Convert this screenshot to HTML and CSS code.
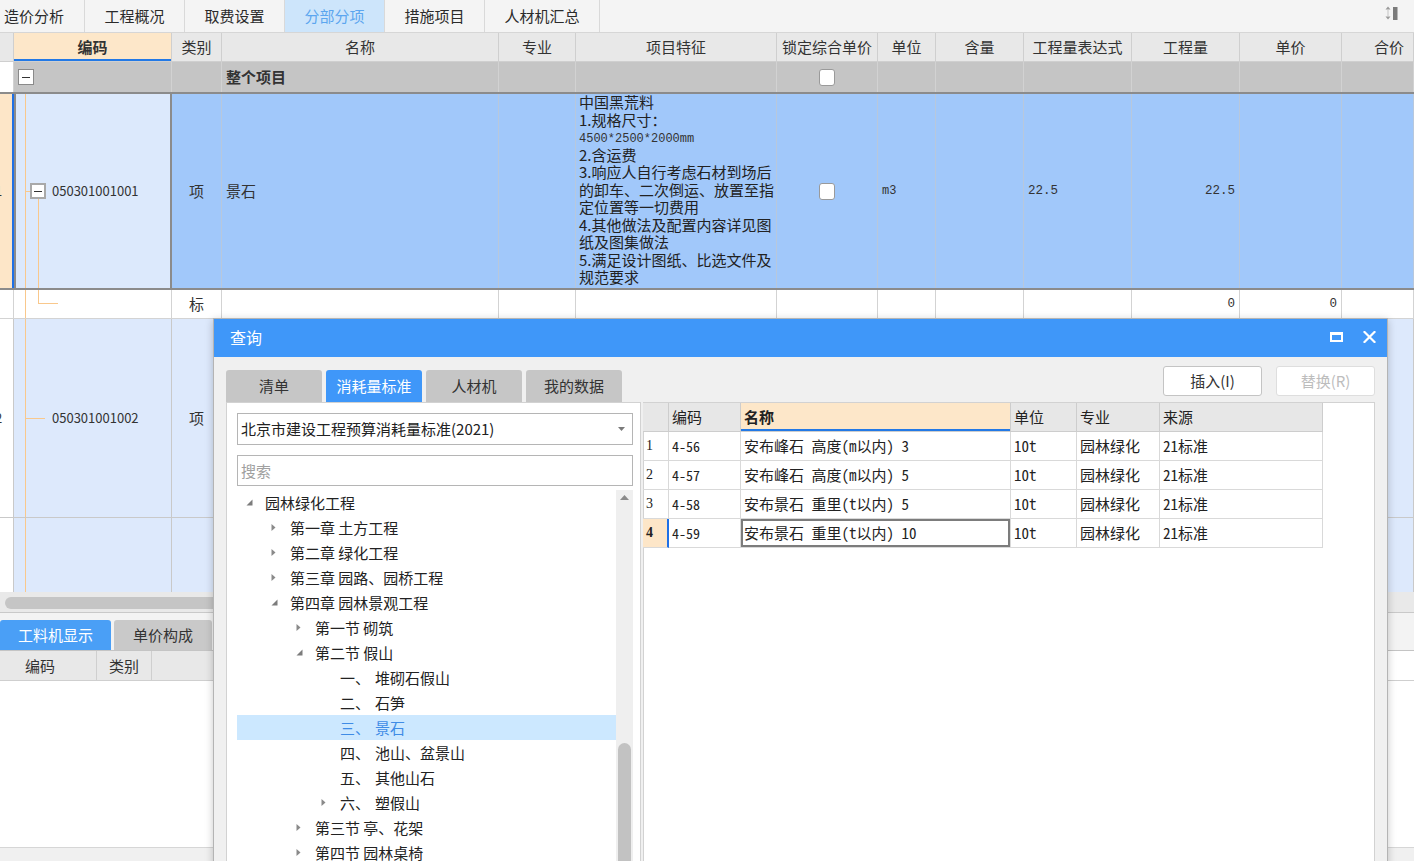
FILE: index.html
```html
<!DOCTYPE html>
<html lang="zh-CN">
<head>
<meta charset="utf-8">
<title>分部分项</title>
<link rel="stylesheet" href="styles.css">
</head>
<body>
<div class="app">
  <div class="topbar">
    <div class="tab first">造价分析</div>
    <div class="tab">工程概况</div>
    <div class="tab">取费设置</div>
    <div class="tab active">分部分项</div>
    <div class="tab">措施项目</div>
    <div class="tab wide">人材机汇总</div>
    <div class="topbar-fill"></div>
    <svg class="sort-icon" width="18" height="16" viewBox="0 0 18 16"><path d="M2.5 4.5 L5 1.5 L7.5 4.5Z" fill="#9a9a9a"/><path d="M5 5 V11" stroke="#c4c4c4" stroke-width="1"/><path d="M2.5 11.5 L5 14.5 L7.5 11.5Z" fill="#9a9a9a"/><rect x="10" y="2" width="4.5" height="13" fill="#7b7b7b"/></svg>
  </div>

  <div class="grid">
    <div class="row head">
      <div class="cell rn"></div>
      <div class="cell hot">编码</div>
      <div class="cell">类别</div>
      <div class="cell">名称</div>
      <div class="cell">专业</div>
      <div class="cell">项目特征</div>
      <div class="cell">锁定综合单价</div>
      <div class="cell">单位</div>
      <div class="cell">含量</div>
      <div class="cell">工程量表达式</div>
      <div class="cell">工程量</div>
      <div class="cell">单价</div>
      <div class="cell last">合价</div>
    </div>

    <div class="row total">
      <div class="cell rn"></div>
      <div class="cell code"><span class="tbox"></span></div>
      <div class="cell"></div>
      <div class="cell"><b>整个项目</b></div>
      <div class="cell"></div>
      <div class="cell"></div>
      <div class="cell ctr"><span class="chk"></span></div>
      <div class="cell"></div>
      <div class="cell"></div>
      <div class="cell"></div>
      <div class="cell"></div>
      <div class="cell"></div>
      <div class="cell"></div>
    </div>

    <div class="row sel">
      <div class="cell rn"><span class="rnum">1</span></div>
      <div class="cell code">
        <span class="vl"></span>
        <span class="vl-down"></span>
        <span class="conn short"></span><span class="tbox big"></span><span class="code-text">050301001001</span>
      </div>
      <div class="cell ctr">项</div>
      <div class="cell">景石</div>
      <div class="cell"></div>
      <div class="cell feat">
        <div class="feat-text">
          <div class="fl">中国黑荒料</div>
          <div class="fl">1.规格尺寸：</div>
          <div class="fl"><span class="mono-s low">4500*2500*2000mm</span></div>
          <div class="fl">2.含运费</div>
          <div class="fl">3.响应人自行考虑石材到场后</div>
          <div class="fl">的卸车、二次倒运、放置至指</div>
          <div class="fl">定位置等一切费用</div>
          <div class="fl">4.其他做法及配置内容详见图</div>
          <div class="fl">纸及图集做法</div>
          <div class="fl">5.满足设计图纸、比选文件及</div>
          <div class="fl">规范要求</div>
        </div>
      </div>
      <div class="cell ctr"><span class="chk"></span></div>
      <div class="cell"><span class="mono-s">m3</span></div>
      <div class="cell"></div>
      <div class="cell"><span class="mono">22.5</span></div>
      <div class="cell rt"><span class="mono">22.5</span></div>
      <div class="cell"></div>
      <div class="cell"></div>
    </div>

    <div class="row std">
      <div class="cell rn"></div>
      <div class="cell code">
        <span class="vl"></span>
        <span class="vl-stub"></span>
        <span class="hl-stub"></span>
      </div>
      <div class="cell ctr">标</div>
      <div class="cell"></div>
      <div class="cell"></div>
      <div class="cell"></div>
      <div class="cell"></div>
      <div class="cell"></div>
      <div class="cell"></div>
      <div class="cell"></div>
      <div class="cell rt"><span class="mono">0</span></div>
      <div class="cell rt"><span class="mono">0</span></div>
      <div class="cell"></div>
    </div>

    <div class="row lite r2">
      <div class="cell rn"><span class="rnum">2</span></div>
      <div class="cell code">
        <span class="vl"></span>
        <span class="conn long"></span><span class="code-text">050301001002</span>
      </div>
      <div class="cell ctr">项</div>
      <div class="cell"></div>
      <div class="cell"></div>
      <div class="cell"></div>
      <div class="cell"></div>
      <div class="cell"></div>
      <div class="cell"></div>
      <div class="cell"></div>
      <div class="cell"></div>
      <div class="cell"></div>
      <div class="cell"></div>
    </div>

    <div class="row lite r3">
      <div class="cell rn"></div>
      <div class="cell code"><span class="vl"></span></div>
      <div class="cell"></div>
      <div class="cell"></div>
      <div class="cell"></div>
      <div class="cell"></div>
      <div class="cell"></div>
      <div class="cell"></div>
      <div class="cell"></div>
      <div class="cell"></div>
      <div class="cell"></div>
      <div class="cell"></div>
      <div class="cell"></div>
    </div>
  </div>

  <div class="hscroll"><div class="hthumb"></div></div>

  <div class="bottom">
    <div class="btabs">
      <div class="btab on">工料机显示</div>
      <div class="btab">单价构成</div>
    </div>
    <div class="bhead">
      <div class="bh first">编码</div>
      <div class="bh">类别</div>
      <div class="bh"></div>
      <div class="bh blank"></div>
    </div>
    <div class="bbody"></div>
    <div class="bfoot"></div>
  </div>

  <div class="dialog">
    <div class="dlg-title">
      <span class="dlg-name">查询</span>
      <svg class="ico-max" width="13" height="10" viewBox="0 0 13 10"><rect x="1" y="1.5" width="11" height="7.5" fill="none" stroke="#fff" stroke-width="2"/><rect x="0" y="0" width="13" height="3" fill="#fff"/></svg>
      <svg class="ico-close" width="13" height="12" viewBox="0 0 13 12"><path d="M1.5 1 L11.5 11 M11.5 1 L1.5 11" stroke="#fff" stroke-width="2.2" stroke-linecap="square"/></svg>
    </div>
    <div class="dlg-tools">
      <div class="dlg-tabs">
        <div class="dtab">清单</div>
        <div class="dtab on">消耗量标准</div>
        <div class="dtab">人材机</div>
        <div class="dtab">我的数据</div>
      </div>
      <div class="dlg-btns">
        <div class="btn">插入(I)</div>
        <div class="btn disabled">替换(R)</div>
      </div>
    </div>
    <div class="dlg-body">
      <div class="lpanel">
        <div class="select">
          <span>北京市建设工程预算消耗量标准(2021)</span>
          <svg class="sel-arrow" width="7" height="4" viewBox="0 0 7 4"><path d="M0 0 H7 L3.5 4Z" fill="#7a7a7a"/></svg>
        </div>
        <div class="search">搜索</div>
        <div class="tree-wrap">
          <div class="tree">
            <div class="tnode l0"><span class="tw"><svg width="7" height="7" viewBox="0 0 7 7"><path d="M6.5 0.5 V6.5 H0.5Z" fill="#7c7c7c"/></svg></span><span class="tt">园林绿化工程</span></div>
            <div class="tnode l1"><span class="tw"><svg width="5" height="7" viewBox="0 0 5 7"><path d="M0.5 0 L4.5 3.5 L0.5 7Z" fill="#8a8a8a"/></svg></span><span class="tt">第一章 土方工程</span></div>
            <div class="tnode l1"><span class="tw"><svg width="5" height="7" viewBox="0 0 5 7"><path d="M0.5 0 L4.5 3.5 L0.5 7Z" fill="#8a8a8a"/></svg></span><span class="tt">第二章 绿化工程</span></div>
            <div class="tnode l1"><span class="tw"><svg width="5" height="7" viewBox="0 0 5 7"><path d="M0.5 0 L4.5 3.5 L0.5 7Z" fill="#8a8a8a"/></svg></span><span class="tt">第三章 园路、园桥工程</span></div>
            <div class="tnode l1"><span class="tw"><svg width="7" height="7" viewBox="0 0 7 7"><path d="M6.5 0.5 V6.5 H0.5Z" fill="#7c7c7c"/></svg></span><span class="tt">第四章 园林景观工程</span></div>
            <div class="tnode l2"><span class="tw"><svg width="5" height="7" viewBox="0 0 5 7"><path d="M0.5 0 L4.5 3.5 L0.5 7Z" fill="#8a8a8a"/></svg></span><span class="tt">第一节 砌筑</span></div>
            <div class="tnode l2"><span class="tw"><svg width="7" height="7" viewBox="0 0 7 7"><path d="M6.5 0.5 V6.5 H0.5Z" fill="#7c7c7c"/></svg></span><span class="tt">第二节 假山</span></div>
            <div class="tnode l3"><span class="tw"></span><span class="tt">一、<span class="sp"></span>堆砌石假山</span></div>
            <div class="tnode l3"><span class="tw"></span><span class="tt">二、<span class="sp"></span>石笋</span></div>
            <div class="tnode l3 on"><span class="tw"></span><span class="tt">三、<span class="sp"></span>景石</span></div>
            <div class="tnode l3"><span class="tw"></span><span class="tt">四、<span class="sp"></span>池山、盆景山</span></div>
            <div class="tnode l3"><span class="tw"></span><span class="tt">五、<span class="sp"></span>其他山石</span></div>
            <div class="tnode l3"><span class="tw"><svg width="5" height="7" viewBox="0 0 5 7"><path d="M0.5 0 L4.5 3.5 L0.5 7Z" fill="#8a8a8a"/></svg></span><span class="tt">六、<span class="sp"></span>塑假山</span></div>
            <div class="tnode l2"><span class="tw"><svg width="5" height="7" viewBox="0 0 5 7"><path d="M0.5 0 L4.5 3.5 L0.5 7Z" fill="#8a8a8a"/></svg></span><span class="tt">第三节 亭、花架</span></div>
            <div class="tnode l2"><span class="tw"><svg width="5" height="7" viewBox="0 0 5 7"><path d="M0.5 0 L4.5 3.5 L0.5 7Z" fill="#8a8a8a"/></svg></span><span class="tt">第四节 园林桌椅</span></div>
          </div>
          <div class="vscroll">
            <svg class="vs-up" width="9" height="5" viewBox="0 0 9 5"><path d="M0 5 L4.5 0 L9 5Z" fill="#8a8a8a"/></svg>
            <div class="vthumb"></div>
          </div>
        </div>
      </div>
      <div class="rpanel">
        <div class="qtable">
          <div class="qrow qhead">
            <div class="qc"></div>
            <div class="qc">编码</div>
            <div class="qc hot">名称</div>
            <div class="qc">单位</div>
            <div class="qc">专业</div>
            <div class="qc">来源</div>
          </div>
          <div class="qrow">
            <div class="qc qn">1</div>
            <div class="qc mc">4-56</div>
            <div class="qc mn">安布峰石 高度(m以内) 3</div>
            <div class="qc mn">10t</div>
            <div class="qc">园林绿化</div>
            <div class="qc mn">21标准</div>
          </div>
          <div class="qrow">
            <div class="qc qn">2</div>
            <div class="qc mc">4-57</div>
            <div class="qc mn">安布峰石 高度(m以内) 5</div>
            <div class="qc mn">10t</div>
            <div class="qc">园林绿化</div>
            <div class="qc mn">21标准</div>
          </div>
          <div class="qrow">
            <div class="qc qn">3</div>
            <div class="qc mc">4-58</div>
            <div class="qc mn">安布景石 重里(t以内) 5</div>
            <div class="qc mn">10t</div>
            <div class="qc">园林绿化</div>
            <div class="qc mn">21标准</div>
          </div>
          <div class="qrow cur">
            <div class="qc qn">4</div>
            <div class="qc mc">4-59</div>
            <div class="qc mn focus">安布景石 重里(t以内) 10</div>
            <div class="qc mn">10t</div>
            <div class="qc">园林绿化</div>
            <div class="qc mn">21标准</div>
          </div>
        </div>
      </div>
    </div>
  </div>
</div>
</body>
</html>
```

FILE: styles.css
```css
* { box-sizing: border-box; margin: 0; padding: 0; }
html, body { width: 1414px; height: 861px; overflow: hidden; }
body {
  font-family: "Noto Sans CJK SC", "Noto Sans", sans-serif;
  font-size: 15px;
  line-height: 1.2;
  color: #333;
  background: #f3f3f3;
}
.app { position: relative; width: 1414px; height: 861px; overflow: hidden; display: flex; flex-direction: column; }

/* top tabs */
.topbar { flex: none; display: flex; height: 33px; background: #f4f4f4; border-bottom: 1px solid #d6d6d6; }
.tab { width: 100px; display: flex; align-items: center; justify-content: center; border-right: 1px solid #d9d9d9; color: #2b2b2b; }
.tab.first { width: 85px; justify-content: flex-start; padding-left: 4px; }
.tab.wide { width: 115px; }
.tab.active { background: #cde5fb; color: #5ca6ef; }
.topbar-fill { flex: 1; }
.sort-icon { margin: 5px 13px 0 0; }

/* main grid */
.grid { flex: none; height: 559px; background: #fff; overflow: hidden; }
.row { display: grid; grid-template-columns: 14px 158px 50px 277px 77px 201px 101px 58px 88px 108px 108px 102px 1fr; }
.cell {
  position: relative; display: flex; align-items: center; padding: 0 4px;
  border-right: 1px solid #d3d3d3; border-bottom: 1px solid #d3d3d3;
  white-space: nowrap; overflow: hidden;
}
.cell.ctr { justify-content: center; }
.cell.rt { justify-content: flex-end; }
.cell.rn { padding: 0; }
.rnum { margin-left: -5px; font-size: 13px; color: #333; }

.row.head { height: 29px; background: #e8e8e8; }
.row.head .cell { justify-content: center; padding: 0 2px; border-color: #cfcfcf; }
.row.head .cell.hot { background: #fde7c9; font-weight: bold; box-shadow: inset 0 -2px 0 #2279e6; }
.row.head .cell.last { justify-content: flex-end; padding-right: 9px; }

.row.total { height: 30px; background: #c5c5c5; }
.row.total .cell { border-bottom: none; border-right-color: #d2d2d2; }
.row.total .cell.rn { background: #fff; }
.row.total .cell.code { padding-left: 4px; }

.row.sel { height: 198px; background: #a1c8fa; border-top: 2px solid #8b8b8b; border-bottom: 2px solid #8b8b8b; }
.row.sel .cell { border-bottom: none; border-right-color: #b8c8dc; }
.row.sel .cell.rn { background: #fde6c8; border-right: 2px solid #1f70e6; }
.row.sel .cell.code { background: #dce9fc; border-left: 2px solid #8b8b8b; border-right: 2px solid #8b8b8b; }

.row.std { height: 29px; }
.row.lite { background: #dde9fc; }
.row.r2 { height: 199px; }
.row.r3 { height: 120px; }
.row.lite .cell { border-color: #c9c9c9; }
.row.lite .cell.rn, .row.std .cell.rn { background: #fff; }

.cell.code { padding: 0; }
.vl { position: absolute; left: 11px; top: 0; bottom: 0; width: 1px; background: #f9c88c; }
.row.sel .vl { left: 9px; }
.vl-down { position: absolute; left: 22px; top: 105px; bottom: 0; width: 1px; background: #f9c88c; }
.vl-stub { position: absolute; left: 24px; top: 0; height: 13px; width: 1px; background: #f9c88c; }
.hl-stub { position: absolute; left: 24px; top: 13px; width: 20px; height: 1px; background: #f9c88c; }
.conn { height: 1px; background: #f9c88c; flex: none; }
.conn.short { width: 4px; margin-left: 10px; }
.conn.long { width: 19px; margin-left: 12px; margin-right: 7px; }
.code-text { font-size: 13px; color: #333; }
.tbox { position: relative; flex: none; width: 16px; height: 16px; border: 1px solid #8a8a8a; background: #fff; }
.tbox::after { content: ""; position: absolute; left: 3px; right: 3px; top: 6.5px; height: 1.5px; background: #333; }
.tbox.big { border: 2px solid #a9a9a9; margin-right: 6px; }
.tbox.big::after { left: 2px; right: 2px; top: 5.5px; }

.chk { width: 16px; height: 17px; background: #fff; border: 1px solid #9a9a9a; border-radius: 3px; }

.cell.feat { align-items: flex-start; padding: 0 3px; }
.feat-text { margin-top: -1px; font-size: 15px; color: #222; white-space: nowrap; }
.fl { height: 17.5px; line-height: 17.5px; display: flex; align-items: center; }
.mono { font-family: "Liberation Mono", monospace; font-size: 12.5px; color: #333; }
.mono-s { font-family: "Liberation Mono", monospace; font-size: 12px; color: #333; }
.mono-s.low { margin-top: 5px; }

/* horizontal scrollbar */
.hscroll { flex: none; height: 20px; background: #e9e9e9; padding: 5px 40px 0 5px; }
.hthumb { height: 12px; border-radius: 6px; background: #c5c5c5; }

/* bottom panel */
.bottom { flex: 1; display: flex; flex-direction: column; background: #f3f3f3; border-top: 1px solid #c9c9c9; }
.btabs { flex: none; height: 38px; display: flex; gap: 3px; padding-top: 7px; border-bottom: 1px solid #c4c4c4; }
.btab { width: 98px; height: 30px; display: flex; align-items: center; justify-content: center; background: #c9c9c9; color: #333; border-radius: 3px 3px 0 0; }
.btab.on { width: 111px; background: #4a9ff6; color: #fff; }
.bhead { flex: none; height: 30px; display: grid; grid-template-columns: 97px 55px 1230px 1fr; border-bottom: 1px solid #cfcfcf; background: #fff; }
.bh { display: flex; align-items: center; justify-content: center; background: #e8e8e8; border-right: 1px solid #cfcfcf; }
.bh.first { padding-right: 16px; }
.bh.blank { background: #fff; border: none; }
.bbody { flex: 1; background: #fff; border-bottom: 1px solid #d6d6d6; }
.bfoot { flex: none; height: 13px; background: #f0f0f0; }

/* dialog */
.dialog {
  position: absolute; left: 213px; top: 318px; width: 1175px; height: 560px;
  background: #f0f0f0; border: 1px solid #b4b4b4;
  box-shadow: 0 2px 8px rgba(0, 0, 0, 0.22);
  display: flex; flex-direction: column;
}
.dlg-title { flex: none; height: 38px; background: #3f97f9; display: flex; align-items: center; padding: 0 11px 0 16px; color: #fff; font-size: 16px; }
.dlg-name { flex: 1; }
.ico-max { margin-right: 20px; margin-top: -3px; }
.ico-close { margin-top: -3px; }

.dlg-tools { flex: none; height: 45px; display: flex; padding: 0 12px; }
.dlg-tabs { display: flex; gap: 4px; align-self: flex-end; }
.dtab { width: 96px; height: 32px; display: flex; align-items: center; justify-content: center; background: #c6c6c6; color: #333; border-radius: 3px 3px 0 0; }
.dtab.on { background: #3f97f9; color: #fff; }
.dlg-btns { margin-left: auto; margin-top: 9px; display: flex; gap: 14px; align-self: flex-start; }
.btn { width: 99px; height: 30px; display: flex; align-items: center; justify-content: center; background: #fff; border: 1px solid #c4c4c4; border-radius: 3px; color: #333; }
.btn.disabled { border-color: #dedede; color: #bdbdbd; }

.dlg-body { flex: 1; min-height: 0; display: flex; gap: 2px; padding: 0 12px; }
.lpanel { width: 415px; flex: none; background: #fff; border: 1px solid #d2d2d2; padding: 10px 7px 0 10px; display: flex; flex-direction: column; }
.select { height: 32px; flex: none; display: flex; align-items: center; padding-left: 3px; border: 1px solid #b5b5b5; background: #fff; color: #222; }
.sel-arrow { margin-left: auto; margin-right: 7px; }
.search { height: 31px; flex: none; margin-top: 10px; display: flex; align-items: center; padding-left: 3px; border: 1px solid #b5b5b5; color: #a0a0a0; }
.tree-wrap { flex: 1; min-height: 0; display: flex; margin-top: 4px; }
.tree { flex: 1; }
.tnode { height: 25px; display: flex; align-items: center; color: #222; white-space: nowrap; }
.tnode.l0 { padding-left: 6px; }
.tnode.l1 { padding-left: 31px; }
.tnode.l2 { padding-left: 56px; }
.tnode.l3 { padding-left: 81px; }
.tnode.on { background: #cce8ff; color: #3f8ce6; }
.tw { width: 16px; flex: none; display: flex; align-items: center; padding-left: 3px; }
.tt { margin-left: 6px; }
.sp { display: inline-block; width: 5px; }
.vscroll { width: 17px; flex: none; background: #efefef; display: flex; flex-direction: column; align-items: center; }
.vs-up { margin-top: 5px; flex: none; }
.vthumb { width: 13px; height: 200px; margin-top: 243px; border-radius: 7px; background: #c2c2c2; flex: none; }

.rpanel { flex: 1; background: #fff; border: 1px solid #d2d2d2; }
.qtable { width: 680px; margin-left: -1px; }
.qrow { display: grid; grid-template-columns: 26px 72px 270px 66px 83px 163px; height: 29px; }
.qc { display: flex; align-items: center; padding-left: 3px; border-right: 1px solid #d9d9d9; border-bottom: 1px solid #d9d9d9; white-space: nowrap; overflow: hidden; color: #222; }
.qhead .qc { background: #e7e7e7; border-color: #cdcdcd; }
.qhead .qc.hot { background: #fde7c9; font-weight: bold; box-shadow: inset 0 -2px 0 #2279e6; }
.qn { font-family: "Liberation Serif", serif; font-size: 14px; }
.mc { font-family: "Noto Sans Mono CJK SC", "Noto Sans CJK SC", sans-serif; font-size: 14px; }
.mn { font-family: "Noto Sans Mono CJK SC", "Noto Sans CJK SC", sans-serif; font-size: 15px; }
.qrow.cur .qn { background: #fde6c8; font-weight: bold; border-right: 2px solid #1f70e6; }
.qc.focus { box-shadow: inset 0 0 0 2px #7c7c7c; }
```
